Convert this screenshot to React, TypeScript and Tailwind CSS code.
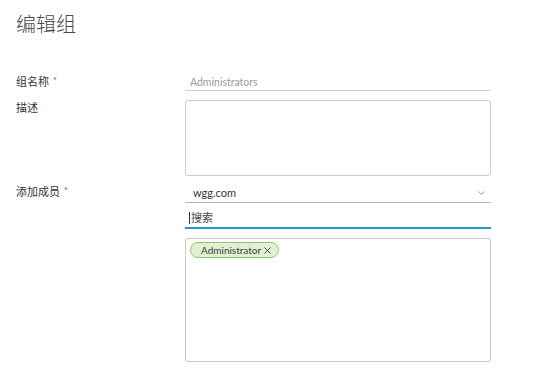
import React from "react";

const CJK = '"Lato", "Noto Sans CJK SC", sans-serif';

function Label({ text, required }: { text: string; required?: boolean }) {
  return (
    <div className="w-[169px] shrink-0 text-[11px] leading-[16px] text-[#333]">
      {text}
      {required && <span className="ml-[4px] text-[9px] text-[#e62700] relative top-[-2px]">*</span>}
    </div>
  );
}

export default function App() {
  return (
    <div className="w-[554px] h-[378px] bg-white pl-[16px] pt-[12px]" style={{ fontFamily: CJK }}>
      <div className="text-[20px] leading-[24px] font-light text-[#4a4a4a]">编辑组</div>

      <div className="mt-[38px] flex flex-col">
        <div className="flex h-[17px]">
          <Label text="组名称" required />
          <div className="w-[306px] h-[17px] border-b border-[#cfcfcf] pl-[5px] text-[10.5px] leading-[16px] text-[#9a9a9a]">
            Administrators
          </div>
        </div>

        <div className="flex mt-[9px]">
          <Label text="描述" />
          <div className="w-[306px] h-[76px] border border-[#cccccc] rounded-[3px]" />
        </div>

        <div className="flex mt-[8px]">
          <Label text="添加成员" required />
          <div className="flex flex-col w-[306px]">
            <div className="h-[19px] border-b border-[#b8b8b8] flex items-center justify-between pl-[8px] pr-[6px] text-[11px] text-[#333]">
              <span className="leading-[16px]">wgg.com</span>
              <svg width="7" height="4" viewBox="0 0 7 4" className="mb-[1px]">
                <path d="M0.5 0.5 L3.5 3.3 L6.5 0.5" fill="none" stroke="#9a9a9a" strokeWidth="1" />
              </svg>
            </div>
            <div className="mt-[5px] h-[21px] border-b-2 border-[#1a9bd7] flex items-center pl-[4px] text-[11px] text-[#444]">
              <span className="w-px h-[12px] bg-[#333] mr-[1px]" />
              <span className="leading-[16px]">搜索</span>
            </div>
            <div className="mt-[9px] h-[124px] border border-[#c8c8c8] rounded-[3px] pt-[3px] pl-[4px] flex items-start">
              <div className="flex items-center h-[16px] pl-[10px] pr-[7px] rounded-full border border-[#8dc96a] bg-[#e0f1d2] text-[10px] text-[#3a3a3a] leading-[13px]">
                Administrator
                <svg width="7" height="7" viewBox="0 0 7 7" className="ml-[3px]">
                  <path d="M0.5 0.5 L6.5 6.5 M6.5 0.5 L0.5 6.5" stroke="#4a4a4a" strokeWidth="1" />
                </svg>
              </div>
            </div>
          </div>
        </div>
      </div>
    </div>
  );
}
